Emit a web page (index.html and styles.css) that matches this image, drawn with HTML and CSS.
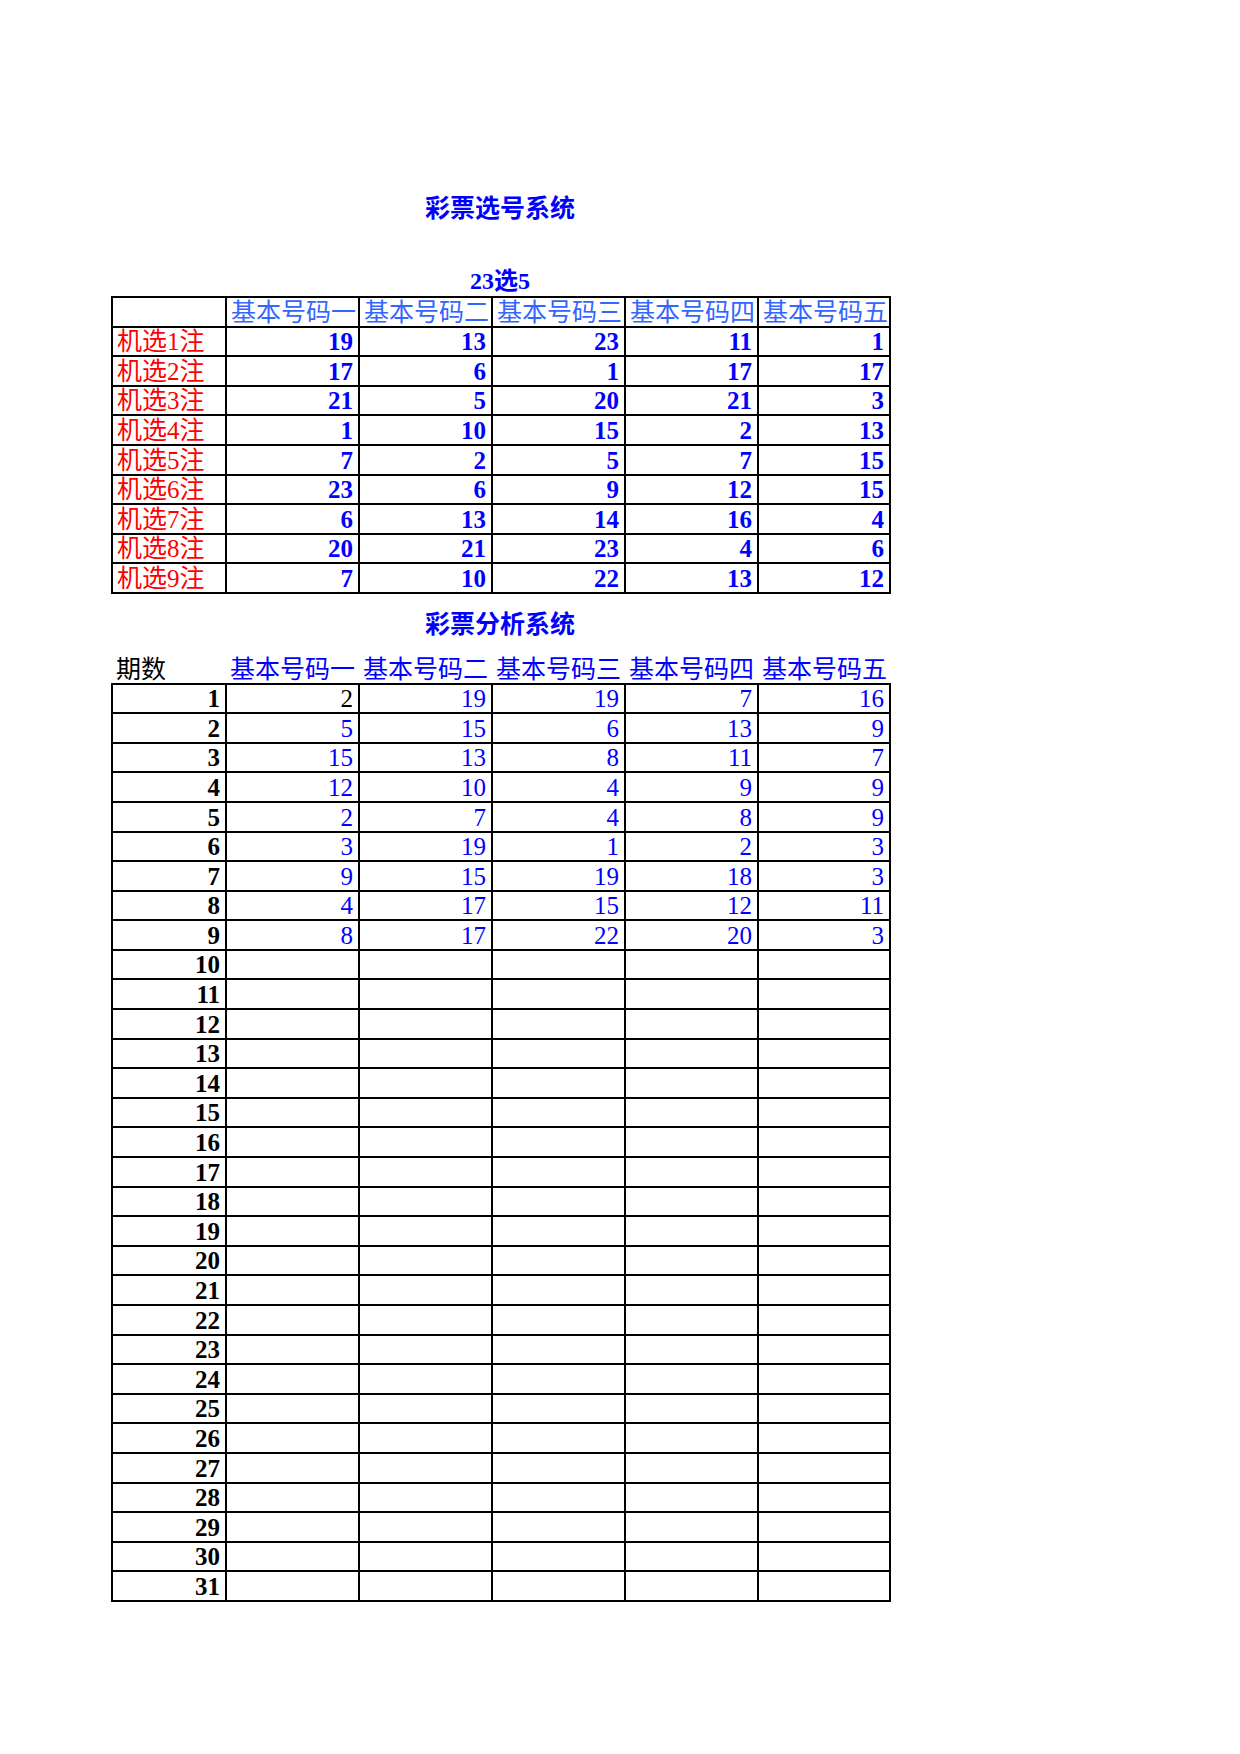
FILE: index.html
```html
<!DOCTYPE html>
<html lang="zh-CN">
<head>
    <meta charset="UTF-8">
    <title>彩票选号系统</title>
    <link rel="stylesheet" href="styles.css">
</head>
<body>
    <div class="sheet">
        <h1 class="title">彩票选号系统</h1>
        <div class="caption">23选5</div>
        <table class="grid pick">
            <colgroup>
                <col class="c-first"><col class="c-num"><col class="c-num"><col class="c-num"><col class="c-num"><col class="c-last">
            </colgroup>
            <thead>
                <tr>
                    <th></th>
                    <th>基本号码一</th>
                    <th>基本号码二</th>
                    <th>基本号码三</th>
                    <th>基本号码四</th>
                    <th>基本号码五</th>
                </tr>
            </thead>
            <tbody>
                <tr><td class="label">机选1注</td><td>19</td><td>13</td><td>23</td><td>11</td><td>1</td></tr>
                <tr><td class="label">机选2注</td><td>17</td><td>6</td><td>1</td><td>17</td><td>17</td></tr>
                <tr><td class="label">机选3注</td><td>21</td><td>5</td><td>20</td><td>21</td><td>3</td></tr>
                <tr><td class="label">机选4注</td><td>1</td><td>10</td><td>15</td><td>2</td><td>13</td></tr>
                <tr><td class="label">机选5注</td><td>7</td><td>2</td><td>5</td><td>7</td><td>15</td></tr>
                <tr><td class="label">机选6注</td><td>23</td><td>6</td><td>9</td><td>12</td><td>15</td></tr>
                <tr><td class="label">机选7注</td><td>6</td><td>13</td><td>14</td><td>16</td><td>4</td></tr>
                <tr><td class="label">机选8注</td><td>20</td><td>21</td><td>23</td><td>4</td><td>6</td></tr>
                <tr><td class="label">机选9注</td><td>7</td><td>10</td><td>22</td><td>13</td><td>12</td></tr>
            </tbody>
        </table>

        <h2 class="title title-second">彩票分析系统</h2>
        <table class="grid history">
            <colgroup>
                <col class="c-first"><col class="c-num"><col class="c-num"><col class="c-num"><col class="c-num"><col class="c-last">
            </colgroup>
            <thead>
                <tr>
                    <th class="period-head">期数</th>
                    <th>基本号码一</th>
                    <th>基本号码二</th>
                    <th>基本号码三</th>
                    <th>基本号码四</th>
                    <th>基本号码五</th>
                </tr>
            </thead>
            <tbody>
                <tr><td class="period">1</td><td class="plain">2</td><td>19</td><td>19</td><td>7</td><td>16</td></tr>
                <tr><td class="period">2</td><td>5</td><td>15</td><td>6</td><td>13</td><td>9</td></tr>
                <tr><td class="period">3</td><td>15</td><td>13</td><td>8</td><td>11</td><td>7</td></tr>
                <tr><td class="period">4</td><td>12</td><td>10</td><td>4</td><td>9</td><td>9</td></tr>
                <tr><td class="period">5</td><td>2</td><td>7</td><td>4</td><td>8</td><td>9</td></tr>
                <tr><td class="period">6</td><td>3</td><td>19</td><td>1</td><td>2</td><td>3</td></tr>
                <tr><td class="period">7</td><td>9</td><td>15</td><td>19</td><td>18</td><td>3</td></tr>
                <tr><td class="period">8</td><td>4</td><td>17</td><td>15</td><td>12</td><td>11</td></tr>
                <tr><td class="period">9</td><td>8</td><td>17</td><td>22</td><td>20</td><td>3</td></tr>
                <tr><td class="period">10</td><td></td><td></td><td></td><td></td><td></td></tr>
                <tr><td class="period">11</td><td></td><td></td><td></td><td></td><td></td></tr>
                <tr><td class="period">12</td><td></td><td></td><td></td><td></td><td></td></tr>
                <tr><td class="period">13</td><td></td><td></td><td></td><td></td><td></td></tr>
                <tr><td class="period">14</td><td></td><td></td><td></td><td></td><td></td></tr>
                <tr><td class="period">15</td><td></td><td></td><td></td><td></td><td></td></tr>
                <tr><td class="period">16</td><td></td><td></td><td></td><td></td><td></td></tr>
                <tr><td class="period">17</td><td></td><td></td><td></td><td></td><td></td></tr>
                <tr><td class="period">18</td><td></td><td></td><td></td><td></td><td></td></tr>
                <tr><td class="period">19</td><td></td><td></td><td></td><td></td><td></td></tr>
                <tr><td class="period">20</td><td></td><td></td><td></td><td></td><td></td></tr>
                <tr><td class="period">21</td><td></td><td></td><td></td><td></td><td></td></tr>
                <tr><td class="period">22</td><td></td><td></td><td></td><td></td><td></td></tr>
                <tr><td class="period">23</td><td></td><td></td><td></td><td></td><td></td></tr>
                <tr><td class="period">24</td><td></td><td></td><td></td><td></td><td></td></tr>
                <tr><td class="period">25</td><td></td><td></td><td></td><td></td><td></td></tr>
                <tr><td class="period">26</td><td></td><td></td><td></td><td></td><td></td></tr>
                <tr><td class="period">27</td><td></td><td></td><td></td><td></td><td></td></tr>
                <tr><td class="period">28</td><td></td><td></td><td></td><td></td><td></td></tr>
                <tr><td class="period">29</td><td></td><td></td><td></td><td></td><td></td></tr>
                <tr><td class="period">30</td><td></td><td></td><td></td><td></td><td></td></tr>
                <tr><td class="period">31</td><td></td><td></td><td></td><td></td><td></td></tr>
            </tbody>
        </table>
    </div>
</body>
</html>
```

FILE: styles.css
```css
* {
    margin: 0;
    padding: 0;
    box-sizing: border-box;
}

body {
    background-color: #fff;
    font-family: "Liberation Serif", "Noto Sans CJK SC", serif;
    color: #000;
}

.sheet {
    width: 778px;
    margin-left: 111px;
    padding-top: 191px;
}

.title {
    height: 30px;
    line-height: 30px;
    text-align: center;
    font-family: "Noto Sans CJK SC", sans-serif;
    font-size: 25px;
    font-weight: bold;
    color: #0000ff;
}

.title-second {
    margin-top: 13px;
    margin-bottom: 17px;
}

.caption {
    margin-top: 45px;
    height: 30px;
    line-height: 30px;
    text-align: center;
    font-size: 24px;
    font-weight: bold;
    color: #0000ff;
}

.grid {
    width: 778px;
    table-layout: fixed;
    border-collapse: collapse;
}

.c-first { width: 114px; }
.c-num { width: 133px; }
.c-last { width: 132px; }

.grid th,
.grid td {
    height: 29.6px;
    padding: 0 5px 1px 4px;
    font-size: 25px;
    line-height: 25px;
    vertical-align: bottom;
    white-space: nowrap;
    overflow: hidden;
    border: 2px solid #000;
}

.grid th {
    text-align: left;
    font-weight: normal;
    color: #3366ff;
}

.pick td {
    text-align: right;
    font-weight: bold;
    color: #0000ff;
}

.pick td.label {
    text-align: left;
    font-weight: normal;
    color: #ff0000;
}

.history thead th {
    border: none;
    color: #0000ff;
}

.history thead th.period-head {
    color: #000;
}

.history td {
    text-align: right;
    color: #0000ff;
}

.history td.period {
    font-weight: bold;
    color: #000;
}

.history td.plain {
    color: #000;
}
```
